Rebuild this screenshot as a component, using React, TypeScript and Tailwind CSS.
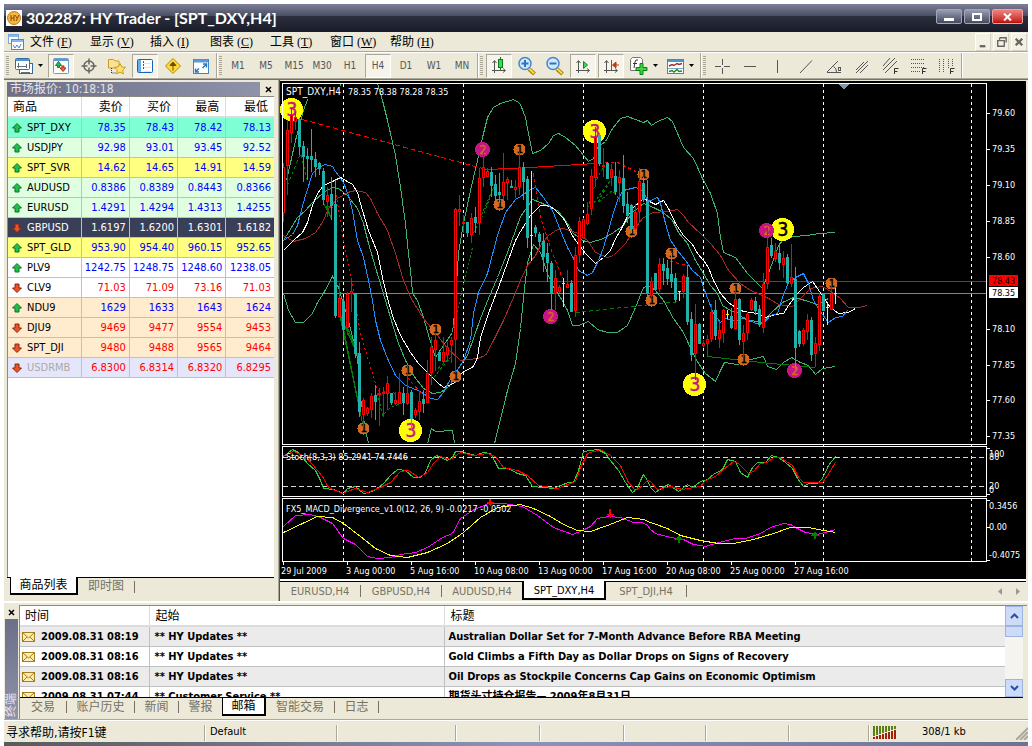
import React from "react";

type Candle = [number, number, number, number, string];

const UP = "#ff0000";
const DOWN = "#20b2aa";
const DOJI = "#ffff00";

// high, body top, body bottom, low, colour (three units per pixel)
const candles: Candle[] = [
  [250, 260, 395, 425, UP], [120, 150, 255, 345, UP], [85, 105, 157, 190, UP], [95, 110, 122, 150, UP],
  [115, 118, 197, 225, DOWN], [183, 197, 228, 305, DOWN], [205, 228, 235, 300, DOWN], [147, 229, 236, 275, DOWN],
  [215, 237, 257, 290, DOWN], [245, 250, 263, 285, DOWN], [265, 273, 357, 375, DOWN], [320, 346, 363, 412, UP],
  [290, 343, 376, 420, DOWN], [300, 373, 704, 713, DOWN], [610, 654, 709, 712, UP], [650, 664, 748, 785, DOWN],
  [635, 643, 742, 765, UP], [595, 634, 639, 695, UP], [640, 641, 820, 835, DOWN], [785, 820, 992, 1010, DOWN],
  [955, 960, 1003, 1040, UP], [980, 985, 998, 1008, UP], [940, 949, 988, 1015, UP], [915, 946, 962, 1020, DOWN],
  [925, 940, 943, 1038, UP], [920, 937, 940, 1010, UP], [888, 908, 938, 990, UP], [940, 940, 967, 975, DOWN],
  [935, 960, 969, 975, UP], [880, 937, 968, 970, UP], [920, 940, 967, 1005, DOWN], [855, 940, 970, 975, UP],
  [930, 937, 1015, 1050, DOWN], [985, 989, 1003, 1015, UP], [935, 963, 992, 1020, UP], [930, 958, 970, 1000, DOWN],
  [840, 880, 967, 970, UP], [770, 802, 877, 915, UP], [758, 780, 807, 870, UP], [810, 815, 840, 842, DOWN],
  [770, 815, 842, 850, UP], [785, 800, 822, 845, UP], [770, 780, 793, 848, UP], [385, 388, 778, 880, UP],
  [345, 388, 394, 437, UP], [405, 427, 430, 460, UP], [425, 427, 457, 470, DOWN], [400, 413, 463, 490, UP],
  [380, 410, 426, 460, DOWN], [265, 295, 427, 465, UP], [215, 262, 290, 320, UP], [265, 272, 287, 290, UP],
  [262, 277, 315, 350, DOWN], [285, 313, 345, 370, DOWN], [280, 337, 343, 370, DOWN], [218, 307, 345, 360, UP],
  [292, 297, 305, 360, UP], [300, 317, 320, 325, DOWN], [300, 320, 326, 355, UP], [215, 262, 318, 345, UP],
  [245, 260, 304, 360, DOWN], [288, 297, 472, 505, DOWN], [273, 465, 468, 542, DOJI], [435, 442, 457, 470, DOWN],
  [455, 463, 483, 497, DOWN], [460, 482, 529, 575, DOWN], [490, 520, 545, 605, DOWN], [543, 550, 639, 690, DOWN],
  [570, 595, 640, 690, UP], [615, 620, 633, 640, UP], [594, 610, 613, 680, DOJI], [570, 613, 620, 625, UP],
  [600, 609, 692, 697, DOWN], [500, 526, 689, 710, UP], [412, 424, 523, 550, UP], [415, 418, 472, 477, UP],
  [365, 402, 430, 435, UP], [268, 287, 384, 405, UP], [140, 170, 290, 320, UP], [160, 166, 250, 258, DOWN],
  [205, 255, 258, 290, UP], [245, 248, 294, 297, DOWN], [253, 268, 290, 318, UP], [245, 287, 332, 345, DOWN],
  [270, 290, 307, 365, UP], [225, 294, 376, 400, DOWN], [335, 373, 404, 430, DOWN], [372, 374, 443, 460, DOWN],
  [372, 397, 445, 450, UP], [265, 303, 394, 425, UP], [290, 308, 358, 365, DOWN], [300, 363, 640, 655, DOWN],
  [590, 604, 646, 650, UP], [578, 580, 627, 630, DOWN], [535, 552, 624, 635, UP], [535, 553, 570, 615, DOWN],
  [540, 563, 593, 615, DOWN], [520, 583, 602, 625, DOWN], [580, 594, 658, 665, DOWN], [633, 633, 636, 662, DOJI],
  [583, 588, 632, 655, UP], [555, 592, 722, 735, DOWN], [697, 717, 821, 842, DOWN], [672, 733, 818, 900, UP],
  [729, 731, 790, 793, DOWN], [780, 790, 794, 803, UP], [765, 778, 788, 828, UP], [672, 695, 773, 785, UP],
  [660, 691, 764, 780, DOWN], [725, 751, 773, 803, UP], [688, 691, 755, 790, UP], [690, 703, 706, 718, DOJI],
  [683, 708, 740, 748, DOWN], [625, 656, 744, 748, UP], [655, 656, 778, 795, DOWN], [735, 760, 782, 830, UP],
  [695, 703, 755, 780, UP], [655, 661, 688, 692, UP], [652, 664, 689, 705, DOWN], [675, 688, 732, 740, DOWN],
  [580, 613, 740, 760, UP], [440, 502, 610, 627, UP], [475, 496, 524, 535, DOWN], [490, 514, 533, 545, UP],
  [492, 519, 545, 570, DOWN], [513, 535, 551, 593, UP], [523, 532, 605, 615, DOWN], [492, 592, 610, 620, UP],
  [560, 596, 802, 870, DOWN], [750, 754, 790, 800, DOWN], [745, 751, 788, 797, UP], [702, 720, 754, 780, UP],
  [710, 721, 821, 842, DOWN], [770, 790, 818, 862, UP], [640, 648, 793, 812, UP], [640, 643, 689, 693, DOWN],
  [670, 681, 684, 735, DOJI], [610, 643, 688, 690, UP], [623, 639, 642, 672, DOJI],
];

// Curve pieces: horizontal offset followed by its points, three units per pixel.
type Piece = [number, string];

function toPoints(pieces: Piece[], top: number) {
  return pieces
    .flatMap(([dx, pts]) =>
      pts.split(" ").map((p) => {
        const [x, y] = p.split(",").map(Number);
        return `${280 + Math.round((x + dx) / 3)}.5,${top + Math.round(y / 3)}.5`;
      })
    )
    .join(" ");
}

function Curve({ pieces, color, top = 80, dash }: { pieces: Piece[]; color: string; top?: number; dash?: string }) {
  return <polyline points={toPoints(pieces, top)} fill="none" stroke={color} strokeDasharray={dash} />;
}

const GREEN = "#3cb371";
const curves: { color: string; pieces: Piece[]; dash?: string }[] = [
  { color: GREEN, pieces: [[0, "10,480 50,410 75,390 100,362 130,335 155,320 175,325 200,345 230,385 250,430 265,490 285,560 305,630 330,710 355,790 375,840 400,885 430,925 455,940 480,935 510,915 525,875 560,825 580,775 600,715 625,655 650,590 680,515 705,450"], [720, "0,407 35,358 60,365 85,378 110,390 135,420 160,460 185,480 210,485 250,475 280,455 310,435 335,395 370,370 400,382 430,395 455,420 475,455 500,490 525,540 550,580 570,615 590,640 605,675 630,690 650,695 665,712 690,722"], [1410, "0,720 40,725 60,700 95,665 130,650 165,660 200,672 235,655"]] },
  { color: GREEN, pieces: [[0, "18,300 45,180 70,90 82,57"]] },
  { color: GREEN, pieces: [[0, "178,10 184,18"]] },
  { color: GREEN, pieces: [[0, "290,10 305,60 320,120 345,225 360,320 375,430 385,520 392,600 397,640 410,660 430,710 447,775 465,830 490,795 515,755 522,700 535,520 550,430 570,330 590,240 607,170 620,110 640,80 660,68 700,58 715,65"], [720, "0,73 15,110 25,160 35,218 60,210 85,190 100,165 115,160 135,172 165,195 205,242 220,235 232,200 255,182 275,145 300,115 320,108 345,118 370,125 382,120 393,135 410,122 440,112 455,122 490,200 520,235 545,295 570,340 590,400 600,470 610,515 645,530 680,580 725,625"], [1410, "45,600 65,545 85,495 100,478 130,468 170,465 205,458 255,455"]] },
  { color: GREEN, pieces: [[0, "10,640 25,690 45,725 70,727 95,700 110,665 130,640 155,587 175,620 205,720 230,830 240,950 255,1050 265,1090"]] },
  { color: GREEN, pieces: [[0, "442,1090 453,1045 465,1052 515,1050 522,1090"]] },
  { color: GREEN, pieces: [[0, "643,1090 680,930 705,850"], [720, "0,745 10,650 22,545 38,493 60,515 80,580 100,620 120,650 140,690 155,735 175,735 205,723 230,748 260,757 290,757 320,735 345,680 370,620 385,615 405,630 430,660 460,715 490,755 515,815 535,850 555,880 585,902 600,870 612,845 650,852 680,840"], [1410, "0,838 40,828 52,858 78,868 100,845 122,832 150,845 175,855 195,883 215,865 255,858"]] },
  { color: "#a52a2a", pieces: [[0, "10,465 40,482 75,474 105,455 125,425 145,385 170,355 200,336 225,331 255,335 270,355 290,400 320,450 345,520 365,590 390,650 430,715 470,765 500,805 540,840 590,835 615,825 640,780 670,720 700,650"], [720, "0,600 20,555 45,525 60,495 85,465 110,448 130,443 175,458 200,480 225,515 262,532 280,525 315,490 340,450 365,415 395,395 440,393 470,388 490,405 505,425 540,460 570,490 600,525 625,570 660,610"], [1410, "0,630 35,645 60,658 85,672 125,677 150,655 180,625 215,619 245,635 270,655 295,680 325,680 350,676"]] },
  { color: "#ffffff", pieces: [[0, "10,510 40,480 65,455 80,425 95,375 110,340 130,315 155,302 180,290 215,312 230,335 245,390 265,450 290,515 305,590 320,655 340,715 360,765 390,815 415,850 440,877 470,905 490,920 520,910 545,875 578,857 590,830 600,770 625,700 655,620 680,545 705,480"], [720, "0,453 30,405 60,375 80,375 100,383 130,415 160,470 195,520 225,550 250,530 270,510 285,475 300,450 320,408 340,380 370,355 405,372 430,360 445,385 465,430 490,465 515,492 530,520 550,540 565,560 580,600 600,640 625,665 645,680 670,692"], [1410, "0,697 20,700 45,712 75,703 100,700 115,675 140,640 160,620 185,604 200,625 220,650 240,680 265,700 295,697 315,685"]] },
  { color: "#1e90ff", pieces: [[0, "10,480 35,462 50,435 60,400 75,345 95,280 115,262 135,253 155,257 165,272 190,305 205,345 215,390 232,480 250,530 265,600 275,660 285,720 300,780 320,835 345,885 375,915 420,932 450,955 470,958 490,935 505,905 525,875 550,840 570,780 580,700 595,635 620,580 650,465 675,395 705,357"], [720, "0,348 30,328 45,322 70,352 95,390 120,450 140,500 160,535 175,570 200,586 215,575 235,540 250,500 265,450 280,395 295,350 310,330 345,320 365,330 385,362 410,352 420,370 435,430 450,480 470,510 495,540 515,570 540,590 550,620 565,660 580,700 600,725 615,715 645,722 670,710"], [1410, "0,720 15,730 40,728 60,705 80,700 95,650 115,605 135,590 160,580 175,610 190,660 208,690 235,725 255,712 275,708 290,690"]] },
  { color: "#ff0000", dash: "5 3", pieces: [[0, "65,118 605,265"]] },
  { color: "#ff0000", pieces: [[0, "605,268 700,265 945,250"]] },
  { color: "#ff0000", dash: "3 3", pieces: [[720, "220,248 290,245 350,275"]] },
  { color: "#ff0000", dash: "2 3", pieces: [[0, "165,330 190,480 214,600 240,760 290,930 350,938"]] },
  { color: "#ff0000", dash: "3 3", pieces: [[0, "382,890 420,935 440,935"]] },
  { color: "#ff0000", dash: "3 3", pieces: [[720, "38,280 60,410 95,520 125,595"]] },
  { color: "#ff0000", dash: "3 3", pieces: [[720, "450,542 500,555"]] },
  { color: "#008000", dash: "3 3", pieces: [[0, "22,315 60,220 82,300"]] },
  { color: "#008000", dash: "2 2", pieces: [[0, "520,740 540,650 575,500"]] },
  { color: "#008000", dash: "3 2", pieces: [[0, "460,890 510,830 490,850 465,870"]] },
  { color: "#008000", dash: "3 2", pieces: [[0, "580,460 640,320 605,410"]] },
  { color: "#008000", dash: "4 3", pieces: [[720, "165,697 480,662"]] },
  { color: "#008000", dash: "3 2", pieces: [[720, "200,385 232,290 250,260"]] },
  { color: "#008000", dash: "3 2", pieces: [[720, "220,370 270,300 230,365 275,330 300,360"]] },
  { color: "#008000", pieces: [[0, "130,370 152,415 138,378 160,380"]] },
  { color: "#008000", pieces: [[0, "180,700 245,1030 178,700 235,830 200,740 225,800"]] },
  { color: "#008000", dash: "3 2", pieces: [[0, "290,940 305,1005 330,980 370,965"]] },
  { color: "#008000", pieces: [[720, "562,829 750,848"], [1410, "100,852 195,862"]] },
];

const bigMarks = [[291, 109], [410, 430], [594, 131], [694, 384], [782, 229]];
const twos = [[482, 149], [550, 316], [766, 230], [794, 370]];
const ones = [[519, 149], [499, 204], [435, 329], [407, 370], [455, 376], [363, 428], [643, 174], [631, 231], [671, 253], [651, 300], [735, 288], [743, 359], [831, 283]];
const daySplits = [343, 463, 583, 703, 823, 971];
const prices: [number, string][] = [[113, "79.60"], [149, "79.35"], [185, "79.10"], [221, "78.85"], [257, "78.60"], [329, "78.10"], [365, "77.85"], [400, "77.60"], [436, "77.35"]];
const dates = ["29 Jul 2009", "3 Aug 00:00", "5 Aug 16:00", "10 Aug 08:00", "13 Aug 00:00", "17 Aug 16:00", "20 Aug 08:00", "25 Aug 00:00", "27 Aug 16:00"];

const stochMain: Piece[] = [[0, "10,48 35,28 55,35 80,70 105,90 120,120 130,143 160,148 190,160 200,145 225,138 250,160 275,152 310,130 330,105 350,88 375,90 400,110 420,112 435,95 450,60 467,45 500,60 515,50 525,33 545,32 560,40 585,45 610,37 630,40 645,65 655,85 685,85 710,98 735,105 755,137 790,142 820,145 840,135 865,127 880,125 895,90 910,33 950,28 975,38 990,60 1015,90 1035,125 1055,157 1070,145 1080,120 1090,102 1100,120"], [1110, "0,142 15,155 35,140 55,133 85,152 110,133 125,142 150,122 170,118 190,103 215,88 232,58 255,63 270,95 292,110 305,80 320,65 345,65 362,45 385,52 405,65 425,85 440,115 460,137 475,128 500,130 515,115 535,75 555,48"]];
const stochSignal: Piece[] = [[0, "10,45 40,33 75,48 95,72 125,108 145,140 185,158 225,143 260,157 300,140 330,125 360,93 385,90 415,112 440,97 460,70 480,48 510,58 540,37 580,45 620,38 645,48 670,80 710,90 740,105 775,135 830,145 885,123 900,80 920,38 960,28 990,45 1020,75 1045,125 1065,150 1085,135 1100,120"], [1110, "0,124 20,148 60,137 95,147 150,137 165,120 195,108 220,88 250,62 265,70 295,100 310,92 330,70 350,65 370,50 390,50 425,75 445,110 460,127 515,127 530,105 555,65"]];
const macdMain: Piece[] = [[0, "10,258 45,225 90,223 120,230 155,248 190,293 225,313 260,347 290,355 330,350 360,342 405,335 440,322 485,290 515,280 540,235 575,210 625,188 670,190 725,198 770,225 820,262 875,283 905,270 930,258 950,235 985,228 1020,232 1060,245 1085,245 1100,255"], [1110, "0,268 15,280 60,290 100,297 130,312 165,317 205,307 255,295 285,295 330,280 360,260 400,250 420,252 440,265 465,277 500,283 555,268"]];
const macdSignal: Piece[] = [[0, "10,277 65,248 110,227 155,230 190,248 240,287 285,325 330,345 380,350 440,335 500,310 550,275 600,230 650,200 720,193 760,203 810,228 850,252 890,270 930,273 980,255 1040,232 1090,237"], [1110, "0,247 50,265 90,285 150,300 205,310 250,310 310,297 370,280 420,262 475,260 520,270 555,277"]];

function Chart() {
  return (
    <svg
      viewBox="280 81 746 498"
      preserveAspectRatio="xMinYMin meet"
      className="block w-full bg-black font-['DejaVu_Sans_Condensed',sans-serif] text-[9px]"
      shapeRendering="crispEdges"
      role="img"
      aria-label="SPT_DXY,H4"
    >
      {daySplits.map((x) => (
        <line key={x} x1={x + 0.5} y1={84} x2={x + 0.5} y2={561} stroke="#fff" strokeDasharray="3 3" />
      ))}
      <path d="M283 281.5H986" stroke="#ff0000" />
      <path d="M283 293.5H986" stroke="#778899" />
      {curves.map((c, i) => (
        <Curve key={i} pieces={c.pieces} color={c.color} dash={c.dash} />
      ))}
      <path d="M838 84h11l-5 5h-1z" fill="#8296a8" />
      {bigMarks.map(([x, y], i) => (
        <g key={i}>
          <circle cx={x + 0.5} cy={y + 0.5} r={11.5} fill="#ffff00" />
          <text x={x + 1} y={y + 7} textAnchor="middle" className="text-[19px]" fill={i === 4 ? "#000" : "#c71585"} stroke={i === 4 ? "#000" : "#c71585"} strokeWidth={0.5}>
            3
          </text>
        </g>
      ))}
      {twos.map(([x, y]) => (
        <g key={x}>
          <circle cx={x + 0.5} cy={y + 0.5} r={7.5} fill="#c71585" />
          <text x={x + 1} y={y + 5} textAnchor="middle" className="text-[12px]" fill="#d2691e" stroke="#d2691e" strokeWidth={0.5}>
            2
          </text>
        </g>
      ))}
      {ones.map(([x, y]) => (
        <g key={`${x}-${y}`}>
          <circle cx={x + 0.5} cy={y + 0.5} r={6} fill="#d2691e" />
          <text x={x + 1} y={y + 4} textAnchor="middle" className="text-[11px]" fill="#000" stroke="#000" strokeWidth={0.5}>
            1
          </text>
        </g>
      ))}
      {candles.map(([hi, a, b, lo, color], k) => {
        const x = 283 + 4 * k;
        const y1 = 80 + Math.round(a / 3);
        const y2 = Math.max(y1 + 1, 80 + Math.round(b / 3));
        return (
          <g key={k}>
            <path d={`M${x + 0.5} ${80 + Math.round(hi / 3)}V${80 + Math.round(lo / 3)}`} stroke={color} />
            {color === DOJI ? (
              <path d={`M${x - 1} ${y1 + 0.5}h3`} stroke={color} />
            ) : (
              <rect x={x - 0.5} y={y1 + 0.5} width={2} height={y2 - y1} fill={color === UP ? "#000" : color} stroke={color} />
            )}
          </g>
        );
      })}

      <path d="M283 457.5H986M283 486.5H986" stroke="#d8d8d8" strokeDasharray="5 3" />
      <Curve pieces={stochMain} color="#32cd32" top={440} />
      <Curve pieces={stochSignal} color="#ff0000" top={440} />
      <Curve pieces={macdMain} color="#ff00ff" top={440} />
      <Curve pieces={macdSignal} color="#ffff00" top={440} />
      <path d="M489 499h2v3h3l-4 4l-4-4h3zM609 509h2v5h3l-4 4l-4-4h3z" fill="#ff0000" />
      <path d="M678 543h2v-3h3l-4-5l-4 5h3zM814 539h2v-3h3l-4-5l-4 5h3z" fill="#008000" />

      <path d="M282.5 83.5H986.5V444.5H282.5zM282.5 446.5H986.5V496.5H282.5zM282.5 498.5H986.5V561.5H282.5z" fill="none" stroke="#fff" />

      <g fill="#fff">
        <text x={286} y={95} className="text-[10px]">SPT_DXY,H4</text>
        <text x={348} y={95}>78.35 78.38 78.28 78.35</text>
        <text x={286} y={460}>Stoch(8,3,3) 85.2941 74.7446</text>
        <text x={286} y={512}>FX5_MACD_Divergence_v1.0(12, 26, 9) -0.0217 -0.0502</text>
        {prices.map(([y, p]) => (
          <g key={p}>
            <path d={`M987 ${y + 0.5}h3`} stroke="#fff" />
            <text x={992} y={y + 3}>{p}</text>
          </g>
        ))}
        <path d="M987 448.5h3M987 494.5h3M987 500.5h3M987 527.5h3M987 560.5h3" stroke="#fff" />
        <text x={989} y={457}>100</text>
        <text x={989} y={460}>80</text>
        <text x={989} y={489}>20</text>
        <text x={989} y={493}>0</text>
        <text x={989} y={509}>0.3456</text>
        <text x={989} y={530}>0.00</text>
        <text x={989} y={558}>-0.4075</text>
        {dates.map((d, i) => (
          <g key={d}>
            <path d={`M${283.5 + 64 * i} 562v3`} stroke="#fff" />
            <text x={i === 0 ? 281 : 282 + 64 * i} y={574}>{d}</text>
          </g>
        ))}
      </g>
      <rect x={989} y={275} width={29} height={11} fill="#ff0000" />
      <text x={992} y={284} fill="#000">78.43</text>
      <rect x={989} y={287} width={29} height={11} fill="#fff" />
      <text x={992} y={296} fill="#000">78.35</text>
    </svg>
  );
}

const menus = [["文件", "F"], ["显示", "V"], ["插入", "I"], ["图表", "C"], ["工具", "T"], ["窗口", "W"], ["帮助", "H"]];

function Icon({ children, w = 20 }: { children: React.ReactNode; w?: number }) {
  return (
    <svg width={w} height="20" viewBox={`0 0 ${w} 20`} fill="none" className="shrink-0">
      {children}
    </svg>
  );
}

function Tool({ label, pressed, children }: { label: string; pressed?: boolean; children: React.ReactNode }) {
  return (
    <div className="flex w-7 justify-center">
      <button
        aria-label={label}
        aria-pressed={!!pressed}
        className={
          pressed
            ? "flex h-6 w-[26px] items-center justify-center border border-t-[#aca899] border-r-white border-b-white border-l-[#aca899] bg-[#f6f4ea]"
            : "flex h-6 w-[26px] items-center justify-center border border-transparent"
        }
      >
        {children}
      </button>
    </div>
  );
}

function Grip() {
  return <div className="mr-[2px] h-5 w-[3px] shrink-0 bg-[repeating-linear-gradient(#aca899_0_1px,#ece9d8_1px_2px)]" />;
}

function Divider() {
  return <div className="mx-px h-full w-[2px] shrink-0 border-l border-[#aca899] bg-white" />;
}

const drop = <path d="M0 8h5l-2.5 3z" fill="#000" />;
const axes = <path d="M5.500 17V5M3.500 7l2-2.500l2 2.500M3 14.500h13M14 12.500l2.500 2l-2.500 2" stroke="#555" />;

function Toolbar() {
  return (
    <div className="flex h-[26px] shrink-0 items-center overflow-hidden border-t border-white bg-[#ece9d8] pl-[2px]">
      <Grip />
      <button aria-label="新图表" className="flex h-6 w-9 items-center gap-1 pl-[3px]">
        <Icon>
          <rect x="5.500" y="7.500" width="13" height="10" fill="#fff" stroke="#356a9c" />
          <rect x="1.500" y="2.500" width="14" height="11" rx="1" fill="#fff" stroke="#2f6ea8" />
          <path d="M2 4h13" stroke="#4c93cf" strokeWidth="2" />
          <path d="M4.500 7v5M3 10.500h10M12.500 8v4M7 16.500h9" stroke="#5c6f80" />
        </Icon>
        <svg width="5" height="20" viewBox="0 0 5 20">{drop}</svg>
      </button>
      <Tool label="市场报价" pressed>
        <Icon>
          <rect x="2.500" y="2.500" width="15" height="15" rx="1" fill="#fff" stroke="#6b9ec6" />
          <path d="M3 4h14" stroke="#5b9bd5" strokeWidth="2" />
          <path d="M7.500 5.500l-3 4h2v2h2v-2h2z" fill="#2db84b" stroke="#147a2c" />
          <path d="M12 15.500l-3-3.500h2v-2h2v2h2z" fill="#e06a3c" stroke="#a33314" />
        </Icon>
      </Tool>
      <Tool label="十字准线">
        <Icon>
          <circle cx="10" cy="10" r="5" stroke="#666" strokeWidth="1.500" />
          <path d="M10 2.500v15M2.500 10h15" stroke="#666" strokeWidth="1.500" />
          <rect x="8.500" y="8.500" width="3" height="3" fill="#ece9d8" />
        </Icon>
      </Tool>
      <Tool label="导航器">
        <Icon>
          <path d="M1.500 5V3.500h5l1.500 1.500h4v7h-10.500z" fill="#fbe193" stroke="#c99b2e" />
          <path d="M4.500 12v5h4" stroke="#333" strokeDasharray="1 1" />
          <path d="M13 7.500l1.700 3.400 3.800.5-2.800 2.700.7 3.800-3.400-1.800-3.400 1.800.7-3.800-2.800-2.700 3.800-.5z" fill="#ffe36a" stroke="#c99b1c" />
        </Icon>
      </Tool>
      <Tool label="终端" pressed>
        <Icon>
          <rect x="2.500" y="3.500" width="15" height="13" rx="1" fill="#fff" stroke="#1565b0" />
          <rect x="3" y="4" width="3" height="12" fill="#6aaee6" />
          <path d="M9 7.500h7M9 11.500h7M9 15.500h7" stroke="#dce6f0" />
          <path d="M8 6h1M8 9h1M8 12h1" stroke="#e02020" strokeWidth="2" />
        </Icon>
      </Tool>
      <Tool label="数据窗口">
        <Icon>
          <path d="M10 2.500L17.500 10L10 17.500L2.500 10z" fill="#ffd83a" stroke="#b58a00" />
          <path d="M10 14.500V8M7 9.500L10 6l3 3.500z" stroke="#6b4e00" fill="#6b4e00" />
        </Icon>
      </Tool>
      <Tool label="全屏">
        <Icon>
          <rect x="2.500" y="3.500" width="15" height="14" fill="#fff" stroke="#3f86c4" />
          <path d="M3 5h14" stroke="#5b9bd5" strokeWidth="3" />
          <path d="M12 8h3.500v3.500M15 8.500L11.500 12M4.500 12.500V16H8M5 15.500L8 12.500" stroke="#2b7ac2" strokeWidth="1.500" />
        </Icon>
      </Tool>
      <Divider />
      <Grip />
      {["M1", "M5", "M15", "M30", "H1", "H4", "D1", "W1", "MN"].map((t) => (
        <Tool key={t} label={t} pressed={t === "H4"}>
          <span className="font-['DejaVu_Sans_Condensed',sans-serif] text-[10px] text-[#555]">{t}</span>
        </Tool>
      ))}
      <Divider />
      <Grip />
      <Tool label="蜡烛图" pressed>
        <Icon>
          {axes}
          <path d="M11.500 1v13" stroke="#0a7a1c" />
          <rect x="9.500" y="3.500" width="4" height="8" fill="#3fd45a" stroke="#0a7a1c" />
        </Icon>
      </Tool>
      {["放大", "缩小"].map((t, i) => (
        <Tool key={t} label={t}>
          <Icon>
            <path d="M12 13l5.500 5" stroke="#a57c10" strokeWidth="4" />
            <path d="M12 12.500l5 5" stroke="#f7dc4a" strokeWidth="2" />
            <circle cx="8" cy="7.500" r="6" fill="#cfe8fb" stroke="#4a85d0" strokeWidth="1.500" />
            <path d={i === 0 ? "M8 4v7M4.500 7.500h7" : "M4.500 7.500h7"} stroke="#2f74b5" strokeWidth="2" />
          </Icon>
        </Tool>
      ))}
      <Tool label="自动滚动" pressed>
        <Icon>
          {axes}
          <path d="M10.500 5.500v7l4-3.500z" fill="#3fd45a" stroke="#0a8a20" />
        </Icon>
      </Tool>
      <Tool label="图表平移" pressed>
        <Icon>
          {axes}
          <path d="M10.500 4v10" stroke="#1c6fa8" />
          <path d="M18 9h-5M15 6l-3.500 3 3.500 3z" stroke="#c03a10" fill="#c03a10" />
        </Icon>
      </Tool>
      <button aria-label="技术指标" className="flex h-6 w-9 items-center gap-1 pl-[4px]">
        <Icon>
          <path d="M3.500 1.500h8l2 2v11h-12v-11z" fill="#fff" stroke="#777" />
          <path d="M9 4q-2.500-1-3 2l-1 6M4 7.500h4" stroke="#333" />
          <path d="M11 7.500h3v4h4v3h-4v4h-3v-4H7v-3h4z" fill="#3fd43f" stroke="#0a7a1c" />
        </Icon>
        <svg width="5" height="20" viewBox="0 0 5 20">{drop}</svg>
      </button>
      <button aria-label="模板" className="flex h-6 w-[38px] items-center gap-1 pl-[4px]">
        <Icon>
          <rect x="2.500" y="3.500" width="16" height="14" fill="#fff" stroke="#4a85b8" />
          <path d="M3 5h15" stroke="#4c93cf" strokeWidth="2" />
          <path d="M4 10l3-1.500 2 1 3-2 2 1 3-1" stroke="#a52a2a" strokeWidth="1.500" />
          <path d="M3 12.500h15" stroke="#7aa7cc" />
          <path d="M4 15.500l3-1 2 1.500 3-2.500 2 2 3-.5" stroke="#228b22" strokeWidth="1.500" />
        </Icon>
        <svg width="5" height="20" viewBox="0 0 5 20">{drop}</svg>
      </button>
      <Divider />
      <Grip />
      <Tool label="十字"><Icon><path d="M10.500 3v6M10.500 12v6M3 10.500h6M12 10.500h6" stroke="#555" /></Icon></Tool>
      <Tool label="水平线"><Icon><path d="M4 10.500h12" stroke="#555" /></Icon></Tool>
      <Tool label="垂直线"><Icon><path d="M9.500 4v13" stroke="#555" /></Icon></Tool>
      <Tool label="趋势线"><Icon><path d="M4 17L16 4.500" stroke="#555" /></Icon></Tool>
      <Tool label="角度线"><Icon><path d="M3 16.500h14M3 16L14 5M9.500 10.500q3 1.500 3 5.500" stroke="#555" /><rect x="14.500" y="11.500" width="2" height="3" stroke="#555" /></Icon></Tool>
      <Tool label="等距通道"><Icon><path d="M4 14l8-8M4 17L16 5M8 17l8-8" stroke="#555" /></Icon></Tool>
      <Tool label="斐波通道"><Icon><path d="M3 10l7-8M3 14L15 2M5 17L17 5" stroke="#555" /><path d="M14.500 18v-5.500h4M14.500 15.500h3" stroke="#333" /></Icon></Tool>
      <Tool label="斐波回调"><Icon><path d="M3 3.500h14M3 7.500h14M3 11.500h14M3 15.500h9" stroke="#555" strokeDasharray="1 1" /><path d="M14.500 18v-5.500h4M14.500 15.500h3" stroke="#333" /></Icon></Tool>
      <Tool label="斐波时间"><Icon><path d="M3.500 3v14M7.500 3v14M12.500 3v9M16.500 3v8" stroke="#555" strokeDasharray="1 1" /><path d="M14.500 18v-5.500h4M14.500 15.500h3" stroke="#333" /></Icon></Tool>
      <Divider />
    </div>
  );
}

// symbol, bid, ask, high, low, row class, up
const quotes: [string, string, string, string, string, string, boolean][] = [
  ["SPT_DXY", "78.35", "78.43", "78.42", "78.13", "bg-[#7fffd4] text-[#0000ff]", true],
  ["USDJPY", "92.98", "93.01", "93.45", "92.52", "bg-[#e0ffe0] text-[#0000ff]", true],
  ["SPT_SVR", "14.62", "14.65", "14.91", "14.59", "bg-[#ffff80] text-[#0000ff]", true],
  ["AUDUSD", "0.8386", "0.8389", "0.8443", "0.8366", "bg-[#e0ffe0] text-[#0000ff]", true],
  ["EURUSD", "1.4291", "1.4294", "1.4313", "1.4255", "bg-[#e0ffe0] text-[#0000ff]", true],
  ["GBPUSD", "1.6197", "1.6200", "1.6301", "1.6182", "bg-[#3a3f58] text-white", false],
  ["SPT_GLD", "953.90", "954.40", "960.15", "952.65", "bg-[#ffff80] text-[#0000ff]", true],
  ["PLV9", "1242.75", "1248.75", "1248.60", "1238.05", "bg-white text-[#0000ff]", true],
  ["CLV9", "71.03", "71.09", "73.16", "71.03", "bg-white text-[#ff0000]", false],
  ["NDU9", "1629", "1633", "1643", "1624", "bg-[#ffebcd] text-[#0000ff]", true],
  ["DJU9", "9469", "9477", "9554", "9453", "bg-[#ffebcd] text-[#ff0000]", false],
  ["SPT_DJI", "9480", "9488", "9565", "9464", "bg-[#ffebcd] text-[#ff0000]", false],
  ["USDRMB", "6.8300", "6.8314", "6.8320", "6.8295", "bg-[#e6e6fa] text-[#ff0000]", false],
];

function symbolColor(s: string) {
  if (s === "GBPUSD") return "text-white";
  if (s === "USDRMB") return "text-[#aaa]";
  return "text-black";
}

function MarketWatch() {
  return (
    <section className="flex w-[275px] shrink-0 flex-col border-r border-[#aca899] pt-[2px] pl-[3px]">
      <div className="flex h-[14px] items-center pr-[6px]">
        <div className="flex h-[14px] flex-1 items-center overflow-hidden bg-linear-to-r from-[#6c6f87] to-[#8f93aa] pl-[3px] text-[12px] leading-[14px] whitespace-pre text-[#e4e4ea]">
          市场报价: 10:18:18
        </div>
        <button aria-label="关闭" className="ml-[5px]">
          <svg width="7" height="7" viewBox="0 0 7 7"><path d="M1 1l5 5M6 1L1 6" stroke="#000" strokeWidth="1.500" /></svg>
        </button>
      </div>
      <div className="mr-1 flex-1 border-t border-l border-[#8c8a80] bg-white">
        <table className="w-full table-fixed border-collapse">
          <thead>
            <tr className="h-5 text-[12px]">
              <th className="w-[73px] border-r border-b-2 border-[#dcdcdc] pl-[5px] text-left font-normal">商品</th>
              {["卖价", "买价", "最高", "最低"].map((h) => (
                <th key={h} className="border-r border-b-2 border-[#dcdcdc] pr-[6px] text-right font-normal last:border-r-0">{h}</th>
              ))}
            </tr>
          </thead>
          <tbody>
            {quotes.map(([sym, bid, ask, hi, lo, cls, up]) => (
              <tr key={sym} className={`h-5 text-[11px] leading-[19px] ${cls}`}>
                <td className={`border-r border-b border-[#c0c0c0] pl-[3px] ${symbolColor(sym)}`}>
                  <span className="flex items-center gap-1">
                    <svg width="12" height="12" viewBox="0 0 12 12">
                      {up ? (
                        <path d="M6 1.500L1.500 6H4v4h4V6h2.500z" fill="#1fc04a" stroke="#0b7326" />
                      ) : (
                        <path d="M6 10.500L1.500 6H4V2h4v4h2.500z" fill="#e8542a" stroke="#8d2410" />
                      )}
                    </svg>
                    {sym}
                  </span>
                </td>
                {[bid, ask, hi, lo].map((v, i) => (
                  <td key={i} className="border-r border-b border-[#c0c0c0] pr-[3px] text-right last:border-r-0">{v}</td>
                ))}
              </tr>
            ))}
          </tbody>
        </table>
      </div>
      <div className="mr-1 mb-[6px] flex h-[18px] text-[12px] leading-[17px]">
        <div className="w-[3px] border-t border-black" />
        <button className="w-[68px] border-r-2 border-b-2 border-l border-black bg-white pb-px">商品列表</button>
        <div className="flex flex-1 items-center border-t border-black text-[#777263]">
          <button className="w-14">即时图</button>
          <span className="h-3 w-px bg-[#777263]" />
        </div>
      </div>
    </section>
  );
}

const chartTabs = ["EURUSD,H4", "GBPUSD,H4", "AUDUSD,H4", "SPT_DXY,H4", "SPT_DJI,H4"];

function ChartPane() {
  return (
    <section className="flex min-w-0 flex-1 flex-col border-l border-[#55534a] pt-px pr-[2px]">
      <Chart />
      <div className="h-[2px] bg-white" />
      <div className="flex h-[20px] items-start text-[11px] leading-[15px] text-[#777263]">
        {chartTabs.map((t, i) =>
          i === 3 ? (
            <button key={t} className="h-[19px] w-[84px] border-r-2 border-b-2 border-l-2 border-black bg-white pt-px text-black">{t}</button>
          ) : (
            <div key={t} className="flex h-[19px] items-center border-t border-black">
              <button className="w-20">{t}</button>
              {i !== 2 && <span className="h-3 w-px bg-[#777263]" />}
            </div>
          )
        )}
        <div className="flex h-[19px] flex-1 items-center justify-end gap-3 border-t border-black pr-[6px]">
          <button aria-label="向左"><svg width="5" height="7" viewBox="0 0 5 7"><path d="M4 0v7L0 3.500z" fill="#999" /></svg></button>
          <button aria-label="向右"><svg width="5" height="7" viewBox="0 0 5 7"><path d="M1 0v7l4-3.500z" fill="#999" /></svg></button>
        </div>
      </div>
    </section>
  );
}

const mails = [
  ["2009.08.31 08:19", "** HY Updates **", "Australian Dollar Set for 7-Month Advance Before RBA Meeting"],
  ["2009.08.31 08:16", "** HY Updates **", "Gold Climbs a Fifth Day as Dollar Drops on Signs of Recovery"],
  ["2009.08.31 08:16", "** HY Updates **", "Oil Drops as Stockpile Concerns Cap Gains on Economic Optimism"],
  ["2009.08.31 07:44", "** Customer Service **", "期货头寸持仓报告— 2009年8月31日"],
];

function Terminal() {
  return (
    <section className="flex h-[118px] shrink-0 border-t-2 border-white pt-[2px]">
      <div className="flex w-[15px] flex-col items-center">
        <button aria-label="关闭" className="flex h-[14px] items-center">
          <svg width="7" height="7" viewBox="0 0 7 7"><path d="M1 1l5 5M6 1L1 6" stroke="#000" strokeWidth="1.500" /></svg>
        </button>
        <div className="flex w-[13px] flex-1 items-center justify-start overflow-hidden bg-linear-to-b from-[#6c6f87] to-[#8f93aa] pb-[2px] text-[12px] leading-[13px] text-[#e4e4ea] [writing-mode:sideways-lr]">
          终端
        </div>
      </div>
      <div className="mr-px flex min-w-0 flex-1 flex-col border-t border-l border-[#8c8a80] pr-1">
        <div className="flex h-[92px] border-b border-black bg-white">
          <div className="min-w-0 flex-1 overflow-hidden">
            <table className="w-full table-fixed border-collapse">
              <thead>
                <tr className="h-5 text-left text-[12px]">
                  <th className="w-[129px] border-r border-b-2 border-[#dcdcdc] pl-[5px] font-normal">时间</th>
                  <th className="w-[295px] border-r border-b-2 border-[#dcdcdc] pl-[6px] font-normal">起始</th>
                  <th className="border-b-2 border-[#dcdcdc] pl-[6px] font-normal">标题</th>
                </tr>
              </thead>
              <tbody>
                {mails.map(([time, from, title], i) => (
                  <tr key={i} className={`h-5 text-[11px] leading-[19px] font-bold whitespace-nowrap ${i % 2 === 0 ? "bg-[#ebebeb]" : "bg-white"}`}>
                    <td className="border-r border-b border-[#c0c0c0] pl-[2px]">
                      <span className="flex items-center gap-[6px]">
                        <svg width="13" height="10" viewBox="0 0 13 10">
                          <rect x=".5" y=".5" width="12" height="9" fill="#fdeeb0" stroke="#a57f22" />
                          <path d="M1 1l5.500 5L12 1M1 9l4-4M12 9L8 5" stroke="#a57f22" fill="none" />
                        </svg>
                        {time}
                      </span>
                    </td>
                    <td className="border-r border-b border-[#c0c0c0] pl-[5px]">{from}</td>
                    <td className="border-b border-[#c0c0c0] pl-1">{title}</td>
                  </tr>
                ))}
              </tbody>
            </table>
          </div>
          <div className="flex w-[18px] flex-col items-stretch bg-[#f5f4ee]">
            <button aria-label="向上滚动" className="flex h-[20px] items-center justify-center border border-[#9db4de] bg-[#cddbf8]">
              <svg width="9" height="6" viewBox="0 0 9 6"><path d="M1 5l3.500-3.500L8 5" stroke="#2a4fa8" strokeWidth="2" fill="none" /></svg>
            </button>
            <div className="h-[11px] border border-[#9db4de] bg-[#cddbf8]" />
            <div className="flex-1" />
            <button aria-label="向下滚动" className="flex h-[18px] items-center justify-center border border-[#9db4de] bg-[#cddbf8]">
              <svg width="9" height="6" viewBox="0 0 9 6"><path d="M1 1l3.500 3.500L8 1" stroke="#2a4fa8" strokeWidth="2" fill="none" /></svg>
            </button>
          </div>
        </div>
        <div className="flex h-[18px] items-center text-[12px] leading-[17px] text-[#777263]">
          <button className="w-[46px]">交易</button>
          <span className="h-3 w-px bg-[#777263]" />
          <button className="w-[67px]">账户历史</button>
          <span className="h-3 w-px bg-[#777263]" />
          <button className="w-[43px]">新闻</button>
          <span className="h-3 w-px bg-[#777263]" />
          <button className="w-[43px]">警报</button>
          <button className="h-[18px] w-[44px] border-r-2 border-b-2 border-l border-black bg-white text-black">邮箱</button>
          <button className="w-[68px]">智能交易</button>
          <span className="h-3 w-px bg-[#777263]" />
          <button className="w-[43px]">日志</button>
          <span className="h-3 w-px bg-[#777263]" />
        </div>
      </div>
    </section>
  );
}

function StatusBar() {
  const sep = "border-l border-[#aca899] shadow-[inset_1px_0_#fff]";
  return (
    <footer className="flex h-[23px] shrink-0 items-center border-t border-[#aca899] pt-[3px] text-[11px] shadow-[inset_0_1px_#fff]">
      <div className="w-[200px] pl-[2px] text-[12px]">寻求帮助,请按F1键</div>
      <div className={`flex h-4 w-[132px] items-center pl-[5px] ${sep}`}>Default</div>
      <div className={`h-4 w-[119px] ${sep}`} />
      <div className={`h-4 w-[84px] ${sep}`} />
      <div className={`h-4 w-[84px] ${sep}`} />
      <div className={`h-4 w-[82px] ${sep}`} />
      <div className={`h-4 w-[83px] ${sep}`} />
      <div className={`h-4 flex-1 ${sep}`} />
      <div className={`flex h-4 w-[148px] items-center pl-1 ${sep}`}>
        <svg width="25" height="13" viewBox="0 0 25 13" shapeRendering="crispEdges">
          {[0, 1, 2, 3, 4, 5, 6, 7].map((i) => (
            <g key={i}>
              <rect x={i * 3} y="0" width="2" height={10 - i} fill="#5b7f17" />
              <rect x={i * 3} y={11 - i} width="2" height={2 + i} fill="#a0200a" />
            </g>
          ))}
        </svg>
        <span className="ml-6">308/1 kb</span>
      </div>
      <svg width="12" height="14" viewBox="0 0 12 14"><path d="M0 14L12 2M4 14l8-8M8 14l4-4" stroke="#aca899" strokeWidth="2" /></svg>
    </footer>
  );
}

export default function App() {
  return (
    <div className="flex min-h-screen flex-col bg-white px-1 pt-1 font-['DejaVu_Sans_Condensed','Noto_Sans_CJK_SC',sans-serif] text-black">
      <div className="flex flex-1 flex-col bg-[#ece9d8]">
        <header className="flex h-7 shrink-0 items-center bg-[linear-gradient(#7d8098_0%,#4b4f63_42%,#2c2f3e_44%,#191b27_100%)] pr-[5px] pl-[2px]">
          <svg width="16" height="16" viewBox="0 0 16 16">
            <rect width="16" height="16" fill="#fff" />
            <circle cx="8" cy="8" r="6.500" fill="#f0b83c" stroke="#c87a14" />
            <path d="M5 5v6M5 8h3M8 5v6M9 5l2 3M13 5l-3 6" stroke="#8a4408" fill="none" />
          </svg>
          <h1 className="ml-1 font-['Lato','Noto_Sans',sans-serif] text-[16px] font-bold whitespace-nowrap text-white">302287: HY Trader - [SPT_DXY,H4]</h1>
          <div className="ml-auto flex gap-[2px] pb-[3px]">
            <button aria-label="最小化" className="flex h-[15px] w-[26px] items-end justify-center rounded-xs border border-[#a2a6bb] bg-linear-to-b from-[#9a9eb4] to-[#454a60] pb-[2px]">
              <span className="h-[3px] w-[10px] bg-white" />
            </button>
            <button aria-label="最大化" className="flex h-[15px] w-[26px] items-center justify-center rounded-xs border border-[#a2a6bb] bg-linear-to-b from-[#9a9eb4] to-[#454a60]">
              <span className="h-2 w-[10px] border-2 border-white" />
            </button>
            <button aria-label="关闭" className="flex h-[15px] w-[31px] items-center justify-center rounded-xs border border-[#f0a0a0] bg-linear-to-b from-[#f08080] to-[#c00000]">
              <svg width="9" height="8" viewBox="0 0 9 8"><path d="M1 0.500l7 7M8 0.500l-7 7" stroke="#fff" strokeWidth="2" /></svg>
            </button>
          </div>
        </header>
        <nav className="flex h-5 shrink-0 items-center border-b border-[#aca899] pl-1 text-[12px] leading-[18px]">
          <svg width="16" height="16" viewBox="0 0 16 16" fill="none">
            <rect x=".5" y=".5" width="10" height="9" fill="#fff" stroke="#7aa7e0" />
            <rect x="3.500" y="5.500" width="12" height="10" fill="#fff" stroke="#4a85d8" />
            <path d="M1 2h9M4 7h11" stroke="#8ab6ee" strokeWidth="2" />
            <path d="M5 11l2 3 2-3 2 3 2-4" stroke="#4a85d8" />
          </svg>
          <div className="flex pl-[6px]">
            {menus.map(([name, key]) => (
              <button key={key} className="flex w-15 items-baseline gap-[3px] whitespace-nowrap">
                {name}
                <span className="font-['Liberation_Serif',serif] text-[12px]">(<u>{key}</u>)</span>
              </button>
            ))}
          </div>
          <div className="ml-auto flex gap-[2px] pr-px">
            {["M4 12h6", "M6 3h7v5M6 3v2M4 6h7v6H4z", "M4 4l7 7M11 4l-7 7"].map((d, i) => (
              <button key={i} aria-label={["最小化窗口", "还原窗口", "关闭窗口"][i]} className="border border-t-white border-r-[#d6d2c2] border-b-[#d6d2c2] border-l-white bg-[#f3f1e6]">
                <svg width="14" height="16" viewBox="0 0 15 15"><path d={d} stroke="#68675f" strokeWidth={i === 1 ? 1.5 : 2.5} fill="none" /></svg>
              </button>
            ))}
          </div>
        </nav>
        <Toolbar />
        <div className="h-px bg-[#aca899]" />
        <main className="flex border-t border-[#777263]">
          <MarketWatch />
          <ChartPane />
        </main>
        <Terminal />
        <StatusBar />
        <div className="h-1 shrink-0 bg-linear-to-r from-[#5a5a5a] via-[#8a93b8] to-[#6a7494]" />
      </div>
    </div>
  );
}
